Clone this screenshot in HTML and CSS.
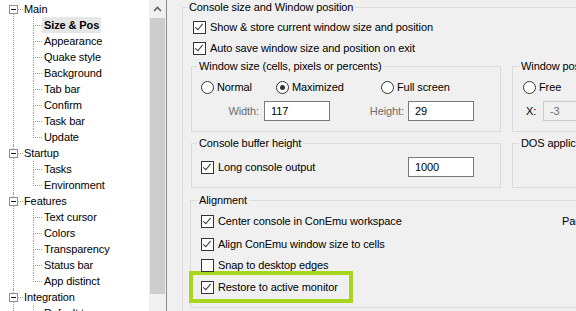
FILE: index.html
```html
<!DOCTYPE html>
<html lang="en">
<head>
  <meta charset="UTF-8">
  <title>ConEmu Settings | Size &amp; Pos</title>
  <link rel="stylesheet" href="styles.css">
</head>
<body>
  <div class="tree-pane">
    <ul class="tree">
      <li>
        <div class="row"><span class="exp"><svg width="9" height="9"><rect x="0.5" y="0.5" width="8" height="8" fill="#fff" stroke="#919191"/><line x1="2" y1="4.5" x2="7" y2="4.5" stroke="#1c1c1c"/></svg></span><span class="dash"></span><span class="name">Main</span></div>
        <ul class="sub">
          <li><span class="name sel">Size &amp; Pos</span></li>
          <li><span class="name">Appearance</span></li>
          <li><span class="name">Quake style</span></li>
          <li><span class="name">Background</span></li>
          <li><span class="name">Tab bar</span></li>
          <li><span class="name">Confirm</span></li>
          <li><span class="name">Task bar</span></li>
          <li><span class="name">Update</span></li>
        </ul>
      </li>
      <li>
        <div class="row"><span class="exp"><svg width="9" height="9"><rect x="0.5" y="0.5" width="8" height="8" fill="#fff" stroke="#919191"/><line x1="2" y1="4.5" x2="7" y2="4.5" stroke="#1c1c1c"/></svg></span><span class="dash"></span><span class="name">Startup</span></div>
        <ul class="sub">
          <li><span class="name">Tasks</span></li>
          <li><span class="name">Environment</span></li>
        </ul>
      </li>
      <li>
        <div class="row"><span class="exp"><svg width="9" height="9"><rect x="0.5" y="0.5" width="8" height="8" fill="#fff" stroke="#919191"/><line x1="2" y1="4.5" x2="7" y2="4.5" stroke="#1c1c1c"/></svg></span><span class="dash"></span><span class="name">Features</span></div>
        <ul class="sub">
          <li><span class="name">Text cursor</span></li>
          <li><span class="name">Colors</span></li>
          <li><span class="name">Transparency</span></li>
          <li><span class="name">Status bar</span></li>
          <li><span class="name">App distinct</span></li>
        </ul>
      </li>
      <li>
        <div class="row"><span class="exp"><svg width="9" height="9"><rect x="0.5" y="0.5" width="8" height="8" fill="#fff" stroke="#919191"/><line x1="2" y1="4.5" x2="7" y2="4.5" stroke="#1c1c1c"/></svg></span><span class="dash"></span><span class="name">Integration</span></div>
        <ul class="sub">
          <li><span class="name">Default term</span></li>
          <li><span class="name">ComSpec</span></li>
        </ul>
      </li>
    </ul>
    <div class="scrollbar">
      <div class="scroll-btn"><svg width="9" height="6"><polyline points="1,5 4.5,1.5 8,5" fill="none" stroke="#606060" stroke-width="1.6"/></svg></div>
      <div class="thumb"></div>
      <div class="track"></div>
    </div>
  </div>

  <div class="page">
    <fieldset class="group outer">
      <legend>Console size and Window position</legend>
      <label class="check top1"><span class="box on"></span>Show &amp; store current window size and position</label>
      <label class="check top2"><span class="box on"></span>Auto save window size and position on exit</label>

      <div class="pair">
        <fieldset class="group left">
          <legend>Window size (cells, pixels or percents)</legend>
          <div class="radios">
            <label class="radio w-normal"><span class="dot"></span>Normal</label>
            <label class="radio w-max"><span class="dot on"></span>Maximized</label>
            <label class="radio"><span class="dot"></span>Full screen</label>
          </div>
          <div class="fields">
            <span class="lbl lbl-w dim">Width:</span>
            <span class="input">117</span>
            <span class="lbl lbl-h dim">Height:</span>
            <span class="input">29</span>
          </div>
        </fieldset>
        <fieldset class="group right">
          <legend>Window position (in pixels)</legend>
          <div class="radios">
            <label class="radio"><span class="dot"></span>Free</label>
          </div>
          <div class="fields pos">
            <span class="lbl-x">X:</span>
            <span class="input off">-3</span>
          </div>
        </fieldset>
      </div>

      <div class="pair">
        <fieldset class="group left buffer">
          <legend>Console buffer height</legend>
          <div class="fields">
            <label class="check long"><span class="box on"></span>Long console output</label>
            <span class="input">1000</span>
          </div>
        </fieldset>
        <fieldset class="group right buffer">
          <legend>DOS application</legend>
        </fieldset>
      </div>

      <fieldset class="group align">
        <legend>Alignment</legend>
        <div class="align-body">
          <div class="align-list">
            <label class="check a1"><span class="box on"></span>Center console in ConEmu workspace</label>
            <label class="check a2"><span class="box on"></span>Align ConEmu window size to cells</label>
            <label class="check a3"><span class="box"></span>Snap to desktop edges</label>
            <label class="check a4 hl"><span class="box on"></span>Restore to active monitor</label>
          </div>
          <div class="pad">Pad</div>
        </div>
      </fieldset>
    </fieldset>
  </div>
</body>
</html>
```

FILE: styles.css
```css
html, body {
  margin: 0;
  padding: 0;
  height: 100%;
  overflow: hidden;
}
body {
  display: flex;
  background: #f0f0f0;
  color: #000;
  font-family: 'Liberation Sans', Arial, sans-serif;
  font-size: 11px;
  letter-spacing: -0.1px;
  line-height: 14px;
}

/* tree */
.tree-pane {
  width: 166px;
  flex: none;
  display: flex;
  border-right: 1px solid #8b8b8b;
  background: #fff;
}
.tree {
  flex: 1;
  list-style: none;
  margin: 0;
  padding: 1px 0 0 0;
  overflow: hidden;
}
.tree > li {
  position: relative;
}
.tree > li::before {
  content: "";
  position: absolute;
  left: 13px;
  top: 0;
  bottom: 0;
  border-left: 1px dotted #a0a0a0;
}
.tree > li:first-child::before {
  top: 9px;
}
.row {
  position: relative;
  display: flex;
  align-items: center;
  height: 16px;
  padding-left: 9px;
}
.exp {
  display: block;
  width: 9px;
  height: 9px;
  z-index: 1;
}
.exp svg {
  display: block;
}
.dash {
  width: 5px;
  margin: 0 1px 0 0;
  border-top: 1px dotted #a0a0a0;
}
.name {
  padding: 0 2px;
  line-height: 16px;
  white-space: nowrap;
}
.row .name {
  padding: 0;
}
.sub {
  list-style: none;
  margin: 0;
  padding: 0;
}
.sub li {
  position: relative;
  height: 16px;
  padding-left: 42px;
  display: flex;
}
.sub li::before {
  content: "";
  position: absolute;
  left: 33px;
  top: 0;
  width: 8px;
  height: 8px;
  border-left: 1px dotted #a0a0a0;
  border-bottom: 1px dotted #a0a0a0;
}
.sub li:not(:last-child)::after {
  content: "";
  position: absolute;
  left: 33px;
  top: 9px;
  bottom: 0;
  border-left: 1px dotted #a0a0a0;
}
.sel {
  background: #e6e6e6;
  font-weight: bold;
}

.scrollbar {
  width: 17px;
  flex: none;
  display: flex;
  flex-direction: column;
  background: #f0f0f0;
}
.scroll-btn {
  height: 18px;
  display: flex;
  align-items: center;
  justify-content: center;
}
.scroll-btn svg {
  display: block;
}
.thumb {
  height: 276px;
  margin: 0 1px;
  background: #cdcdcd;
}
.track {
  flex: 1;
}

/* settings page */
.page {
  flex: 1;
  min-width: 0;
  padding-left: 15px;
}
.group {
  margin: 0;
  padding: 0 9px 10px 9px;
  border: 1px solid #dcdcdc;
  min-width: 0;
}
.group legend {
  padding: 0 2px;
  margin-left: -4px;
  line-height: 14px;
  white-space: nowrap;
}
.outer {
  width: 480px;
  padding: 0 8px 0 8px;
  border-bottom: none;
  height: 320px;
  box-sizing: border-box;
}

.check, .radio {
  display: flex;
  align-items: center;
  height: 18px;
  white-space: nowrap;
}
.box {
  width: 11px;
  height: 11px;
  flex: none;
  margin-right: 4px;
  border: 1px solid #333;
  background: #fff;
  position: relative;
}
.box.on::after {
  content: "";
  position: absolute;
  left: 3px;
  top: 0px;
  width: 3px;
  height: 7px;
  border-right: 1.4px solid #333;
  border-bottom: 1.4px solid #333;
  transform: rotate(40deg);
}
.dot {
  width: 11px;
  height: 11px;
  flex: none;
  margin-right: 3px;
  border: 1px solid #333;
  border-radius: 50%;
  background: #fff;
  position: relative;
}
.dot.on::after {
  content: "";
  position: absolute;
  left: 3px;
  top: 3px;
  width: 5px;
  height: 5px;
  border-radius: 50%;
  background: #333;
}

.top1 {
  margin: 4px 0 0 2px;
}
.top2 {
  margin: 3px 0 0 2px;
}

.pair {
  display: flex;
  gap: 11px;
  margin-top: 2px;
}
.pair + .pair {
  margin-top: 4px;
}
.left {
  width: 310px;
  box-sizing: border-box;
  flex: none;
}
.right {
  flex: 1;
  padding-left: 10px;
}
.radios {
  display: flex;
  margin-top: 5px;
}
.w-normal {
  width: 75px;
}
.w-max {
  width: 105px;
}
.fields {
  display: flex;
  align-items: center;
  height: 20px;
  margin-top: 5px;
}
.lbl {
  text-align: right;
}
.dim {
  color: #6d6d6d;
}
.lbl-w {
  width: 58px;
  margin-right: 5px;
}
.lbl-h {
  width: 74px;
  margin-right: 4px;
}
.input {
  width: 58px;
  height: 18px;
  line-height: 18px;
  padding-left: 6px;
  border: 1px solid #7a7a7a;
  background: #fff;
  flex: none;
}
.input.off {
  border-color: #cccccc;
  background: #f0f0f0;
  color: #6d6d6d;
  width: 80px;
}
.pos .lbl-x {
  margin-left: 3px;
  width: 17px;
}
.buffer .fields {
  margin-top: 7px;
}
.long {
  width: 207px;
}

.align {
  margin-top: 5px;
  margin-left: -1px;
  padding-left: 10px;
  padding-bottom: 8px;
}
.align-body {
  display: flex;
}
.align-list {
  width: 361px;
  flex: none;
}
.align-list .check {
  height: 20px;
}
.a1 {
  margin-top: 4px;
}
.a2 {
  margin-top: 3px;
}
.a3 {
  margin-top: 1px;
}
.hl {
  margin: 0 0 0 -8px;
  padding: 2px 0 2px 8px;
  width: 148px;
  outline: 4px solid #a8d61e;
}
.pad {
  margin-top: 7px;
}
```
